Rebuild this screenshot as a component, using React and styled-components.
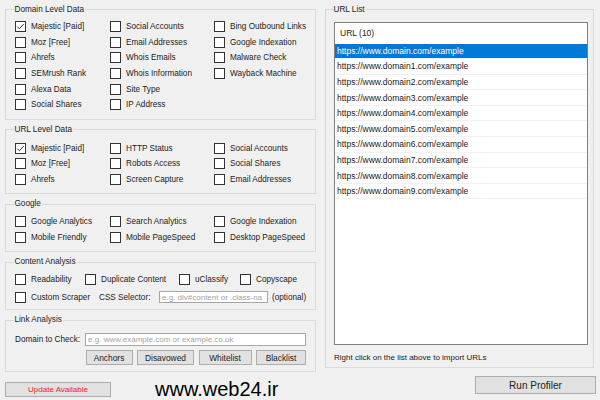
import React from 'react';
import styled, { createGlobalStyle } from 'styled-components';

const Global = createGlobalStyle`
  html, body { margin: 0; padding: 0; background: #f0f0f0; }
  body {
    width: 600px; height: 400px; overflow: hidden;
    font-family: "Liberation Sans", Arial, sans-serif;
    font-size: 8.2px; color: #1b1b1b;
  }
`;

const Window = styled.div`
  display: grid;
  grid-template-columns: 311px 271px;
  column-gap: 9px;
  padding: 4.5px 4px 0 5px;
  height: 400px;
  box-sizing: border-box;
`;

const Column = styled.div`
  display: flex;
  flex-direction: column;
  gap: 5px;
  min-width: 0;
`;

const Group = styled.fieldset`
  margin: 0;
  border: 1px solid #d9d9d9;
  padding: ${p => p.$pt || 4.5}px 9px ${p => p.$pb || 6}px 9px;
  min-width: 0;
  box-sizing: border-box;
`;

const Legend = styled.legend`
  padding: 0 1px;
  margin-left: -1.5px;
  line-height: 10px;
  font-size: 8.2px;
  color: #1b1b1b;
`;

const CheckGrid = styled.div`
  display: grid;
  grid-template-columns: ${p => p.$cols};
  grid-auto-rows: 15.6px;
  align-items: center;
`;

const Check = styled.label`
  display: flex;
  align-items: center;
  gap: 5px;
  white-space: nowrap;
  line-height: 11px;
`;

const Box = styled.span`
  width: 11px;
  height: 11px;
  box-sizing: border-box;
  border: 1px solid #333;
  background: #fff;
  display: flex;
  align-items: center;
  justify-content: center;
  flex: none;
`;

const CheckBox = ({ label, checked }) => (
  <Check>
    <Box>
      {checked && (
        <svg width="9" height="9" viewBox="0 0 9 9">
          <polyline points="1.3,4.6 3.4,6.7 7.7,2.2" fill="none" stroke="#333" strokeWidth="1" />
        </svg>
      )}
    </Box>
    <span>{label}</span>
  </Check>
);

const Row = styled.div`
  display: flex;
  align-items: center;
  height: ${p => p.$h || 15.6}px;
  gap: ${p => p.$gap || 0}px;
  margin-top: ${p => p.$mt || 0}px;
  justify-content: ${p => p.$justify || 'flex-start'};
`;

const Cell = styled.div`
  width: ${p => p.$w}px;
  margin-left: ${p => p.$ml || 0}px;
  flex: none;
  display: flex;
  align-items: center;
  white-space: nowrap;
`;

const TextInput = styled.div`
  height: ${p => p.$h || 12}px;
  width: ${p => (p.$w ? p.$w + 'px' : 'auto')};
  flex: ${p => (p.$w ? 'none' : '1')};
  box-sizing: border-box;
  border: 1px solid #a6a6a6;
  background: #fff;
  color: #a3a3a3;
  font-size: 8px;
  display: flex;
  align-items: center;
  padding-left: 2px;
  white-space: nowrap;
  overflow: hidden;
`;

const Btn = styled.div`
  width: ${p => p.$w}px;
  height: ${p => p.$h || 15}px;
  box-sizing: border-box;
  border: 1px solid #adadad;
  background: #e1e1e1;
  display: flex;
  align-items: center;
  justify-content: center;
  font-size: ${p => p.$fs || 8.4}px;
  color: ${p => p.$color || '#1b1b1b'};
  flex: none;
`;

const Footer = styled.div`
  display: flex;
  align-items: flex-start;
  margin-top: 5px;
`;

const Brand = styled.div`
  font-family: "Liberation Sans", Arial, sans-serif;
  font-size: 20px;
  line-height: 20px;
  color: #000;
  margin-left: 44px;
  margin-top: -3px;
`;

const RightColumn = styled.div`
  display: flex;
  flex-direction: column;
`;

const UrlGroup = styled(Group)`
  padding: 7.5px 5px 4px 8px;
  margin-right: 2px;
`;

const ListBox = styled.div`
  height: 323px;
  box-sizing: border-box;
  border: 1px solid #7f7f7f;
  background: #fff;
  display: flex;
  flex-direction: column;
`;

const ListHeader = styled.div`
  height: 20.5px;
  display: flex;
  align-items: center;
  padding-left: 5px;
  font-size: 8.5px;
  flex: none;
`;

const ListRow = styled.div`
  height: 15.6px;
  box-sizing: border-box;
  border-bottom: 1px solid #f1f1f1;
  display: flex;
  align-items: center;
  padding-left: 2px;
  font-size: 8.5px;
  background: ${p => (p.$sel ? '#0078d7' : 'transparent')};
  color: ${p => (p.$sel ? '#fff' : '#1b1b1b')};
  flex: none;
`;

const Hint = styled.div`
  margin-top: 8px;
  line-height: 10px;
  font-size: 8px;
`;

const RunRow = styled.div`
  display: flex;
  justify-content: flex-end;
  margin-top: 8px;
`;

const urls = [
  'https://www.domain.com/example',
  ...Array.from({ length: 9 }, (_, i) => `https://www.domain${i + 1}.com/example`),
];

export default function App() {
  return (
    <>
      <Global />
      <Window>
        <Column>
          <Group>
            <Legend>Domain Level Data</Legend>
            <CheckGrid $cols="95px 104px 1fr">
              <CheckBox label="Majestic [Paid]" checked />
              <CheckBox label="Social Accounts" />
              <CheckBox label="Bing Outbound Links" />
              <CheckBox label="Moz [Free]" />
              <CheckBox label="Email Addresses" />
              <CheckBox label="Google Indexation" />
              <CheckBox label="Ahrefs" />
              <CheckBox label="Whois Emails" />
              <CheckBox label="Malware Check" />
              <CheckBox label="SEMrush Rank" />
              <CheckBox label="Whois Information" />
              <CheckBox label="Wayback Machine" />
              <CheckBox label="Alexa Data" />
              <CheckBox label="Site Type" />
              <span />
              <CheckBox label="Social Shares" />
              <CheckBox label="IP Address" />
              <span />
            </CheckGrid>
          </Group>

          <Group $pt={6}>
            <Legend>URL Level Data</Legend>
            <CheckGrid $cols="95px 104px 1fr">
              <CheckBox label="Majestic [Paid]" checked />
              <CheckBox label="HTTP Status" />
              <CheckBox label="Social Accounts" />
              <CheckBox label="Moz [Free]" />
              <CheckBox label="Robots Access" />
              <CheckBox label="Social Shares" />
              <CheckBox label="Ahrefs" />
              <CheckBox label="Screen Capture" />
              <CheckBox label="Email Addresses" />
            </CheckGrid>
          </Group>

          <Group>
            <Legend>Google</Legend>
            <CheckGrid $cols="95px 104px 1fr">
              <CheckBox label="Google Analytics" />
              <CheckBox label="Search Analytics" />
              <CheckBox label="Google Indexation" />
              <CheckBox label="Mobile Friendly" />
              <CheckBox label="Mobile PageSpeed" />
              <CheckBox label="Desktop PageSpeed" />
            </CheckGrid>
          </Group>

          <Group $pb={4}>
            <Legend>Content Analysis</Legend>
            <Row>
              <Cell $w={70}><CheckBox label="Readability" /></Cell>
              <Cell $w={94}><CheckBox label="Duplicate Content" /></Cell>
              <Cell $w={61}><CheckBox label="uClassify" /></Cell>
              <Cell $w={60}><CheckBox label="Copyscape" /></Cell>
            </Row>
            <Row $h={16} $mt={2}>
              <Cell $w={84}><CheckBox label="Custom Scraper" /></Cell>
              <Cell $w={60}>CSS Selector:</Cell>
              <TextInput $w={109}>e.g. div#content or .class-na</TextInput>
              <Cell $w={40} $ml={4}>(optional)</Cell>
            </Row>
          </Group>

          <Group $pt={7}>
            <Legend>Link Analysis</Legend>
            <Row $h={14} $gap={5}>
              <span>Domain to Check:</span>
              <TextInput $h={13}>e.g. www.example.com or example.co.uk</TextInput>
            </Row>
            <Row $h={15} $mt={4} $gap={4.5} $justify="flex-end">
              <Btn $w={47}>Anchors</Btn>
              <Btn $w={57}>Disavowed</Btn>
              <Btn $w={53}>Whitelist</Btn>
              <Btn $w={50}>Blacklist</Btn>
            </Row>
          </Group>

          <Footer>
            <Btn $w={106} $h={15} $fs={8} $color="#e8242c">Update Available</Btn>
            <Brand>www.web24.ir</Brand>
          </Footer>
        </Column>

        <RightColumn>
          <UrlGroup>
            <Legend>URL List</Legend>
            <ListBox>
              <ListHeader>URL (10)</ListHeader>
              {urls.map((u, i) => (
                <ListRow key={u} $sel={i === 0}>{u}</ListRow>
              ))}
            </ListBox>
            <Hint>Right click on the list above to import URLs</Hint>
          </UrlGroup>
          <RunRow>
            <Btn $w={121} $h={18} $fs={10}>Run Profiler</Btn>
          </RunRow>
        </RightColumn>
      </Window>
    </>
  );
}
